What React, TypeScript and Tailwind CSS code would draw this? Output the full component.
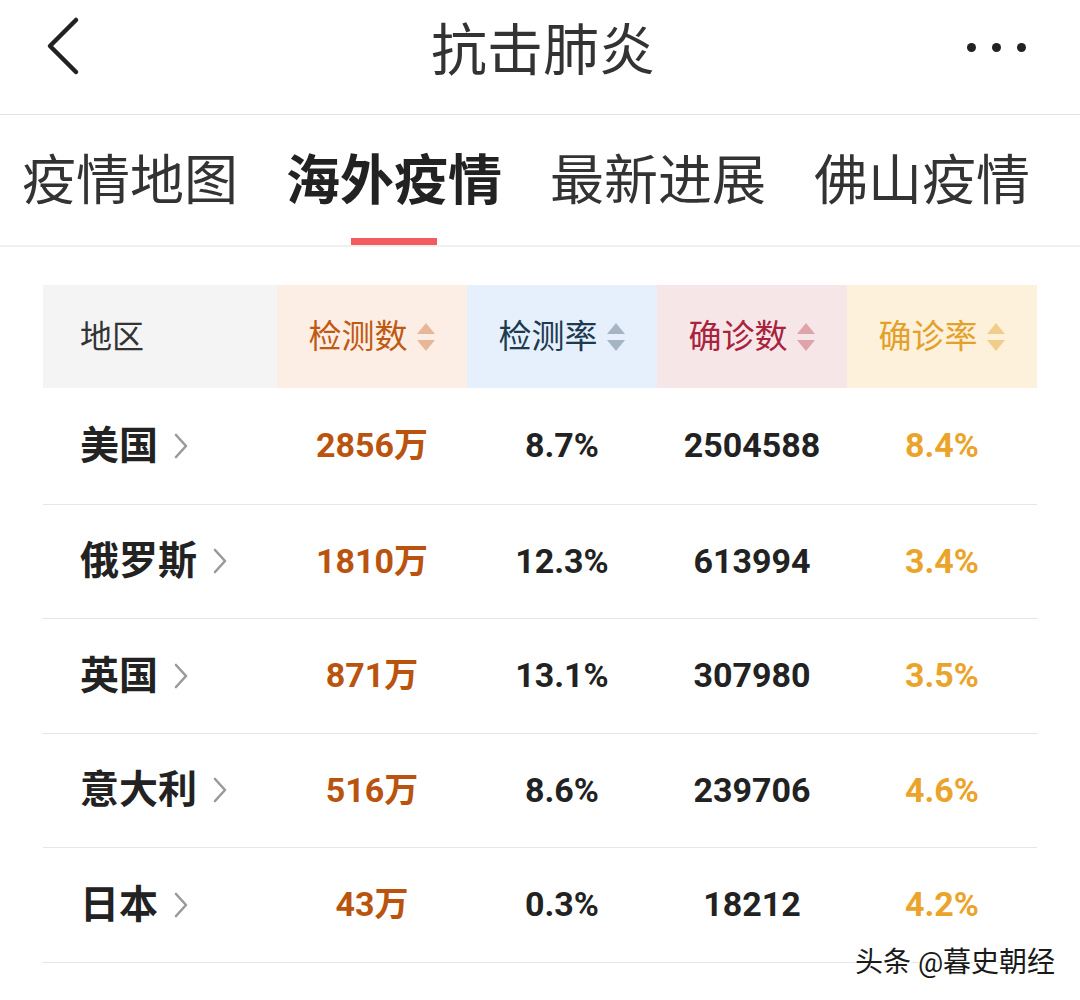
const FONT = '"Roboto", "Noto Sans CJK SC", sans-serif';

type Row = { name: string; tests: string; testRate: string; cases: string; caseRate: string };

const rows: Row[] = [
  { name: '美国', tests: '2856万', testRate: '8.7%', cases: '2504588', caseRate: '8.4%' },
  { name: '俄罗斯', tests: '1810万', testRate: '12.3%', cases: '613994', caseRate: '3.4%' },
  { name: '英国', tests: '871万', testRate: '13.1%', cases: '307980', caseRate: '3.5%' },
  { name: '意大利', tests: '516万', testRate: '8.6%', cases: '239706', caseRate: '4.6%' },
  { name: '日本', tests: '43万', testRate: '0.3%', cases: '18212', caseRate: '4.2%' },
];

const SortIcon = ({ color }: { color: string }) => (
  <svg width="20" height="32" viewBox="0 0 20 32" className="ml-[8px]">
    <path d="M10 2 L19 13 L1 13 Z" fill={color} />
    <path d="M1 19 L19 19 L10 30 Z" fill={color} />
  </svg>
);

const HeadCell = ({ label, bg, text, icon }: { label: string; bg: string; text: string; icon: string }) => (
  <div className={`flex items-center justify-center ${bg}`}>
    <span className={`text-[33px] ${text}`}>{label}</span>
    <SortIcon color={icon} />
  </div>
);

const Chevron = () => (
  <svg width="16" height="28" viewBox="0 0 16 28" className="ml-[15px]">
    <path d="M3 3 L13 14 L3 25" fill="none" stroke="#9a9a9a" strokeWidth="2.6" strokeLinecap="round" strokeLinejoin="round" />
  </svg>
);

const App = () => {
  return (
    <div className="w-[1080px] h-[1000px] bg-white relative overflow-hidden" style={{ fontFamily: FONT }}>
      {/* top bar */}
      <div className="h-[115px] grid grid-cols-[1fr_auto_1fr] items-center px-[44px] border-b border-[#e3e3e3]">
        <svg width="40" height="60" viewBox="0 0 40 60" className="-mt-[22px]">
          <path d="M32 4 L6 30 L32 56" fill="none" stroke="#222" strokeWidth="4.5" strokeLinecap="round" strokeLinejoin="round" />
        </svg>
        <div className="text-[56px] text-[#333] -mt-[12px] pl-[6px]">抗击肺炎</div>
        <div className="flex justify-end gap-[16px] -mt-[20px] pr-[10px]">
          <span className="w-[9px] h-[9px] rounded-full bg-[#222]" />
          <span className="w-[9px] h-[9px] rounded-full bg-[#222]" />
          <span className="w-[9px] h-[9px] rounded-full bg-[#222]" />
        </div>
      </div>

      {/* tabs */}
      <div className="h-[132px] flex items-start gap-[48px] pl-[22px] border-b-2 border-[#f0f0f0]">
        <div className="text-[54px] text-[#333] pt-[26px]">疫情地图</div>
        <div className="relative text-[54px] text-[#222] font-bold pt-[26px] h-full">
          海外疫情
          <div className="absolute bottom-0 left-[65px] w-[86px] h-[7px] bg-[#f25c5c]" />
        </div>
        <div className="text-[54px] text-[#333] pt-[26px]">最新进展</div>
        <div className="text-[54px] text-[#333] pt-[26px]">佛山疫情</div>
      </div>

      {/* table */}
      <div className="mx-[43px] mt-[38px] w-[994px]">
        <div className="grid grid-cols-[234px_190px_190px_190px_190px] h-[103px]">
          <div className="flex items-center pl-[37px] bg-[#f4f4f4]">
            <span className="text-[32px] text-[#333]">地区</span>
          </div>
          <HeadCell label="检测数" bg="bg-[#fdeee5]" text="text-[#bf5a12]" icon="#e8b797" />
          <HeadCell label="检测率" bg="bg-[#e6f0fd]" text="text-[#1c3a50]" icon="#a7b5c3" />
          <HeadCell label="确诊数" bg="bg-[#f7e6e8]" text="text-[#a8233c]" icon="#e0a3aa" />
          <HeadCell label="确诊率" bg="bg-[#fdf1dc]" text="text-[#e3a02a]" icon="#f0cd8b" />
        </div>
        {rows.map((r, i) => (
          <div
            key={r.name}
            className={`grid grid-cols-[234px_190px_190px_190px_190px] border-b border-[#e6e6e6] items-center ${i === 0 ? 'h-[116.5px]' : 'h-[114.5px]'}`}
          >
            <div className="flex items-center pl-[37px]">
              <span className="text-[39px] font-bold text-[#222]">{r.name}</span>
              <Chevron />
            </div>
            <div className="text-center text-[34px] font-bold text-[#b9530e]">{r.tests}</div>
            <div className="text-center text-[34px] font-bold text-[#222]">{r.testRate}</div>
            <div className="text-center text-[34px] font-bold text-[#222]">{r.cases}</div>
            <div className="text-center text-[34px] font-bold text-[#eba42b]">{r.caseRate}</div>
          </div>
        ))}
      </div>

      {/* watermark */}
      <div
        className="absolute left-[855px] top-[942px] text-[28px] text-[#1a1a1a]"
        style={{ textShadow: '2px 2px 0 #fff, -1px -1px 0 #fff, 1px -1px 0 #fff, -1px 1px 0 #fff' }}
      >
        头条 @暮史朝经
      </div>
    </div>
  );
};

export default App;
